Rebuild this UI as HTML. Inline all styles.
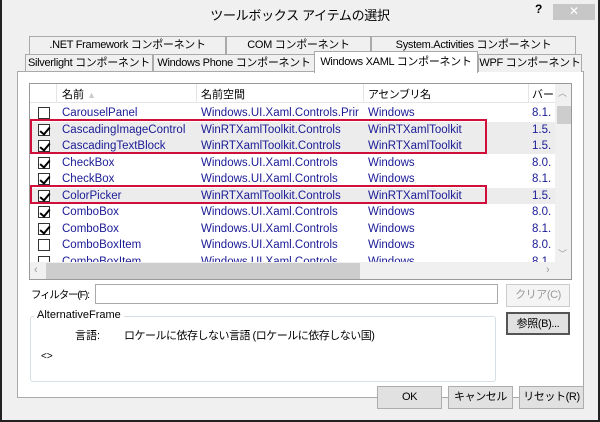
<!DOCTYPE html>
<html><head><meta charset="utf-8"><style>
*{box-sizing:border-box;margin:0;padding:0}
body{width:600px;height:422px;overflow:hidden;background:#f0f0f0;font-family:"Liberation Sans","Noto Sans CJK JP",sans-serif;font-size:11px;color:#000;position:relative}
.a{position:absolute;white-space:nowrap}
.frame{position:absolute;left:0;top:0;width:600px;height:422px;border:2px solid #222;border-top:none;background:#f0f0f0}
.tab{position:absolute;height:18px;border:1px solid #aaa;border-bottom:none;background:#f0f0f0;text-align:center;line-height:17px;font-size:11px;white-space:nowrap;overflow:hidden;letter-spacing:-0.3px}
.panel{position:absolute;left:17px;top:71px;width:567px;height:327px;border:1px solid #aaa;background:#fff}
.list{position:absolute;left:29px;top:83px;width:543px;height:197px;border:1px solid #999;background:#fff;overflow:hidden}
.row{position:absolute;left:0;width:525px;height:16px;line-height:16px;color:#1a1a96;font-size:11.5px}
.row span{position:absolute;top:0}
.cb{position:absolute;left:8px;top:2px;width:12px;height:12px;border:1px solid #333;background:#fff}
.cb.c::after{content:"";position:absolute;left:3px;top:0px;width:4px;height:8px;border:solid #000;border-width:0 2px 2px 0;transform:rotate(40deg)}
.hl{position:absolute;border:2px solid #d0103a}
.btn{position:absolute;height:23px;border:1px solid #adadad;background:#e1e1e1;text-align:center;line-height:21px;font-size:11px;white-space:nowrap;letter-spacing:-0.4px}
.j{letter-spacing:-0.5px}
</style></head><body>
<div class="frame"></div>
<div class="a" style="left:0;width:600px;top:5px;text-align:center;font-size:13px;letter-spacing:-0.3px">ツールボックス アイテムの選択</div>
<div class="a" style="left:535px;top:2px;font-size:12px;font-weight:bold">?</div>
<div class="a" style="left:553px;top:4px;width:42px;height:16px;background:#c7c7c7;color:#fff;text-align:center;line-height:15px;font-size:12px">✕</div>

<div class="tab" style="left:29px;top:36px;width:197px">.NET Framework コンポーネント</div>
<div class="tab" style="left:226px;top:36px;width:145px">COM コンポーネント</div>
<div class="tab" style="left:371px;top:36px;width:205px">System.Activities コンポーネント</div>
<div class="tab" style="left:25px;top:54px;width:128px">Silverlight コンポーネント</div>
<div class="tab" style="left:153px;top:54px;width:162px">Windows Phone コンポーネント</div>
<div class="panel"></div>
<div class="tab" style="left:478px;top:54px;width:104px">WPF コンポーネント</div>
<div class="tab" style="left:314px;top:51px;width:164px;height:22px;background:#fff;z-index:2;line-height:20px">Windows XAML コンポーネント</div>

<div class="list">
 <div class="a" style="left:0;top:0;width:525px;height:19px;border-bottom:1px solid #e5e5e5"></div>
 <div class="a" style="left:26px;top:0;height:19px;border-left:1px solid #e5e5e5"></div>
 <div class="a" style="left:166px;top:0;height:19px;border-left:1px solid #e5e5e5"></div>
 <div class="a" style="left:333px;top:0;height:19px;border-left:1px solid #e5e5e5"></div>
 <div class="a" style="left:498px;top:0;height:19px;border-left:1px solid #e5e5e5"></div>
 <div class="a" style="left:32px;top:2px">名前 <span style="color:#ccc;font-size:9px">▲</span></div>
 <div class="a" style="left:171px;top:2px">名前空間</div>
 <div class="a j" style="left:338px;top:2px">アセンブリ名</div>
 <div class="a" style="left:502px;top:2px">バー</div>

 <div class="row" style="top:21px"><div class="cb"></div><span style="left:32px">CarouselPanel</span><span style="left:171px">Windows.UI.Xaml.Controls.Prir</span><span style="left:338px">Windows</span><span style="left:502px">8.1.</span></div>
 <div class="row" style="top:37.5px;background:#ececec"><div class="cb c"></div><span style="left:32px">CascadingImageControl</span><span style="left:171px">WinRTXamlToolkit.Controls</span><span style="left:338px">WinRTXamlToolkit</span><span style="left:502px">1.5.</span></div>
 <div class="row" style="top:54px;background:#ececec"><div class="cb c"></div><span style="left:32px">CascadingTextBlock</span><span style="left:171px">WinRTXamlToolkit.Controls</span><span style="left:338px">WinRTXamlToolkit</span><span style="left:502px">1.5.</span></div>
 <div class="row" style="top:70.5px"><div class="cb c"></div><span style="left:32px">CheckBox</span><span style="left:171px">Windows.UI.Xaml.Controls</span><span style="left:338px">Windows</span><span style="left:502px">8.0.</span></div>
 <div class="row" style="top:87px"><div class="cb c"></div><span style="left:32px">CheckBox</span><span style="left:171px">Windows.UI.Xaml.Controls</span><span style="left:338px">Windows</span><span style="left:502px">8.1.</span></div>
 <div class="row" style="top:103.5px;background:#ececec"><div class="cb c"></div><span style="left:32px">ColorPicker</span><span style="left:171px">WinRTXamlToolkit.Controls</span><span style="left:338px">WinRTXamlToolkit</span><span style="left:502px">1.5.</span></div>
 <div class="row" style="top:120px"><div class="cb c"></div><span style="left:32px">ComboBox</span><span style="left:171px">Windows.UI.Xaml.Controls</span><span style="left:338px">Windows</span><span style="left:502px">8.0.</span></div>
 <div class="row" style="top:136.5px"><div class="cb c"></div><span style="left:32px">ComboBox</span><span style="left:171px">Windows.UI.Xaml.Controls</span><span style="left:338px">Windows</span><span style="left:502px">8.1.</span></div>
 <div class="row" style="top:153px"><div class="cb"></div><span style="left:32px">ComboBoxItem</span><span style="left:171px">Windows.UI.Xaml.Controls</span><span style="left:338px">Windows</span><span style="left:502px">8.0.</span></div>
 <div class="row" style="top:169.5px"><div class="cb"></div><span style="left:32px">ComboBoxItem</span><span style="left:171px">Windows.UI.Xaml.Controls</span><span style="left:338px">Windows</span><span style="left:502px">8.1.</span></div>

 <div class="a" style="left:525px;top:0;width:17px;height:178px;background:#f0f0f0"></div>
 <div class="a" style="left:528px;top:2px;color:#999;font-size:9px">︿</div>
 <div class="a" style="left:527px;top:22px;width:14px;height:18px;background:#cdcdcd"></div>
 <div class="a" style="left:528px;top:163px;color:#999;font-size:9px">﹀</div>
 <div class="a" style="left:0;top:178px;width:542px;height:18px;background:#f0f0f0"></div>
 <div class="a" style="left:4px;top:180px;color:#999;font-size:11px">‹</div>
 <div class="a" style="left:16px;top:179px;width:314px;height:16px;background:#cdcdcd"></div>
 <div class="a" style="left:516px;top:180px;color:#999;font-size:11px">›</div>
</div>
<div class="hl" style="left:30px;top:119px;width:457px;height:35px"></div>
<div class="hl" style="left:30px;top:185px;width:457px;height:19px"></div>

<div class="a" style="left:31px;top:287px;letter-spacing:-1.2px;font-size:10.5px">フィルター(F):</div>
<div class="a" style="left:95px;top:284px;width:403px;height:20px;border:1px solid #aaa;background:#fff"></div>
<div class="btn" style="left:506px;top:284px;width:64px;color:#999;background:#f4f4f4;border-color:#ccc">クリア(C)</div>
<div class="btn" style="left:506px;top:312px;width:64px;border:2px solid #555">参照(B)...</div>
<div class="a" style="left:30px;top:316px;width:466px;height:66px;border:1px solid #d5dfe5;border-radius:3px"></div>
<div class="a" style="left:34px;top:309px;background:#fff;padding:0 3px">AlternativeFrame</div>
<div class="a" style="left:75px;top:327px">言語:</div>
<div class="a j" style="left:124px;top:327px">ロケールに依存しない言語 (ロケールに依存しない国)</div>
<div class="a" style="left:41px;top:351px;font-size:10px">&lt;&gt;</div>

<div class="btn" style="left:377px;top:386px;width:65px">OK</div>
<div class="btn" style="left:448px;top:386px;width:65px">キャンセル</div>
<div class="btn" style="left:519px;top:386px;width:65px">リセット(R)</div>
</body></html>
